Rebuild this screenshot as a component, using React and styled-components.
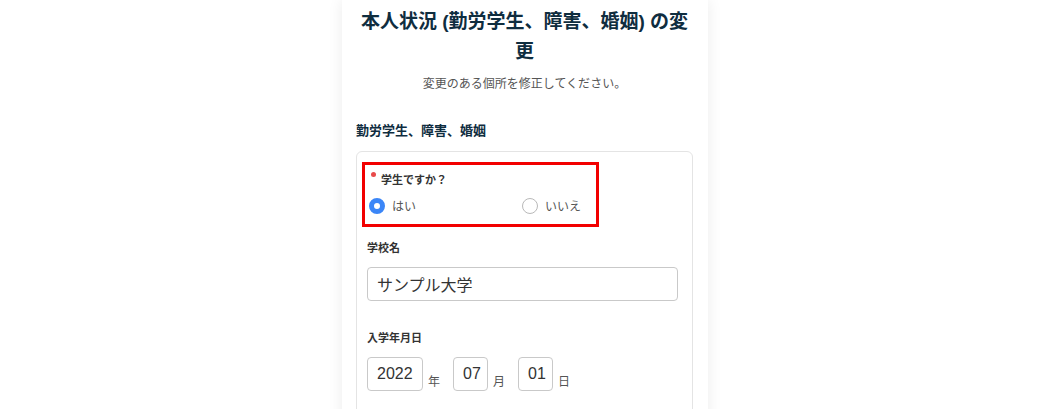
import React from 'react';
import styled, { createGlobalStyle } from 'styled-components';

const GlobalStyle = createGlobalStyle`
  html, body {
    margin: 0;
    padding: 0;
    background: #ffffff;
    font-family: "Noto Sans CJK JP", "Noto Sans", "Liberation Sans", sans-serif;
    overflow: hidden;
  }
`;

const Page = styled.div`
  height: 409px;
  overflow: hidden;
`;

const Panel = styled.div`
  width: 366px;
  min-height: 420px;
  margin-left: 342px;
  box-sizing: border-box;
  padding: 7px 15px 0 14px;
  background: #ffffff;
  box-shadow: 0 0 14px rgba(0, 0, 0, 0.08);
`;

const Title = styled.h1`
  margin: 0;
  font-size: 19px;
  line-height: 30px;
  font-weight: 700;
  color: #0f2d3f;
  text-align: center;
  font-family: "Liberation Sans", "Noto Sans CJK JP", sans-serif;
`;

const Lead = styled.p`
  margin: 7px 0 0;
  font-size: 12px;
  line-height: 18px;
  color: #555555;
  text-align: center;
`;

const SectionTitle = styled.h2`
  margin: 29px 0 0;
  font-size: 13px;
  line-height: 18px;
  font-weight: 700;
  color: #0f2d3f;
`;

const Card = styled.div`
  margin-top: 12px;
  border: 1px solid #e4e4e4;
  border-radius: 6px;
  padding: 10px 14px 40px 10px;
  min-height: 300px;
`;

const Highlight = styled.div`
  width: 237px;
  box-sizing: border-box;
  margin-left: -5px;
  border: 3px solid #f20000;
  padding: 6px 4px 10px 4px;
`;

const QuestionLabel = styled.div`
  position: relative;
  padding-left: 12px;
  font-size: 11px;
  line-height: 16px;
  font-weight: 700;
  color: #333333;
`;

const Required = styled.span`
  position: absolute;
  left: 2px;
  top: 1px;
  width: 5px;
  height: 5px;
  border-radius: 50%;
  background: #e84a4a;
`;

const RadioRow = styled.div`
  display: grid;
  grid-template-columns: 153px 1fr;
  margin-top: 11px;
`;

const RadioOption = styled.label`
  display: flex;
  align-items: center;
  gap: 7px;
  font-size: 12px;
  line-height: 16px;
  color: #555555;
`;

const RadioMark = styled.span`
  width: 16px;
  height: 16px;
  box-sizing: border-box;
  border-radius: 50%;
  border: ${(p) => (p.$checked ? '5px solid #3b86f7' : '1.5px solid #b9b9b9')};
  background: #ffffff;
  flex-shrink: 0;
`;

const Field = styled.div`
  margin-top: ${(p) => p.$top || 0}px;
`;

const FieldLabel = styled.div`
  font-size: 11px;
  line-height: 16px;
  font-weight: 700;
  color: #333333;
`;

const TextInput = styled.div`
  margin-top: 12px;
  width: 311px;
  height: 34px;
  box-sizing: border-box;
  border: 1px solid #c9c9c9;
  border-radius: 4px;
  padding: 0 9px;
  display: flex;
  align-items: center;
  font-size: 16px;
  color: #333333;
`;

const DateRow = styled.div`
  margin-top: 12px;
  display: flex;
  align-items: flex-end;
`;

const DateBox = styled.div`
  width: ${(p) => p.$w}px;
  height: 34px;
  box-sizing: border-box;
  border: 1px solid #c9c9c9;
  border-radius: 4px;
  padding-left: 9px;
  display: flex;
  align-items: center;
  font-size: 16px;
  font-family: "Liberation Sans", sans-serif;
  color: #333333;
`;

const DateUnit = styled.span`
  font-size: 12px;
  line-height: 16px;
  color: #555555;
  margin: 0 ${(p) => p.$gap}px 2px 5px;
`;

export default function App() {
  return (
    <Page>
      <GlobalStyle />
      <Panel>
        <Title>本人状況 (勤労学生、障害、婚姻) の変更</Title>
        <Lead>変更のある個所を修正してください。</Lead>
        <SectionTitle>勤労学生、障害、婚姻</SectionTitle>
        <Card>
          <Highlight>
            <QuestionLabel>
              <Required />
              学生ですか？
            </QuestionLabel>
            <RadioRow>
              <RadioOption>
                <RadioMark $checked />
                はい
              </RadioOption>
              <RadioOption>
                <RadioMark />
                いいえ
              </RadioOption>
            </RadioRow>
          </Highlight>
          <Field $top={12}>
            <FieldLabel>学校名</FieldLabel>
            <TextInput>サンプル大学</TextInput>
          </Field>
          <Field $top={28}>
            <FieldLabel>入学年月日</FieldLabel>
            <DateRow>
              <DateBox $w={56}>2022</DateBox>
              <DateUnit $gap={13}>年</DateUnit>
              <DateBox $w={35}>07</DateBox>
              <DateUnit $gap={13}>月</DateUnit>
              <DateBox $w={35}>01</DateBox>
              <DateUnit $gap={0}>日</DateUnit>
            </DateRow>
          </Field>
        </Card>
      </Panel>
    </Page>
  );
}
